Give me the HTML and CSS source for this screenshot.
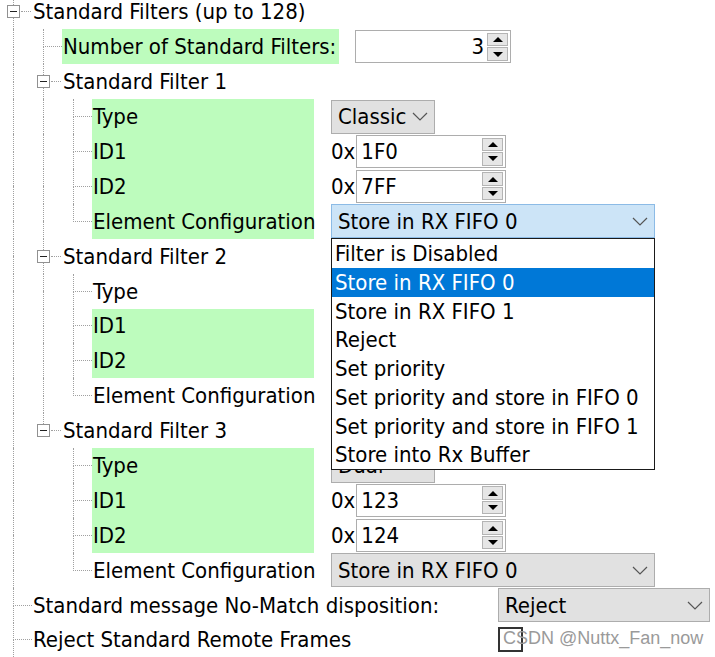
FILE: index.html
```html
<!DOCTYPE html>
<html>
<head>
<meta charset="utf-8">
<link rel="stylesheet" href="styles.css">
</head>
<body>
<div class="tree">
  <!-- 0 -->
  <div class="row">
    <span class="g c box btee"><span class="pmrow"><i class="pm"></i></span></span>
    <span class="lbl">Standard Filters (up to 128)</span>
  </div>
  <!-- 1 -->
  <div class="row">
    <span class="g pipe"></span><span class="g c tee"></span>
    <span class="lbl green w2">Number of Standard Filters:</span>
    <div class="ctrl c2"><div class="spin wnum"><span class="val right">3</span><span class="btns"><span class="up"></span><span class="dn"></span></span></div></div>
  </div>
  <!-- 2 -->
  <div class="row">
    <span class="g pipe"></span><span class="g c box btee"><span class="pmrow"><i class="pm"></i></span></span>
    <span class="lbl">Standard Filter 1</span>
  </div>
  <!-- 3 -->
  <div class="row">
    <span class="g pipe"></span><span class="g pipe"></span><span class="g c tee"></span>
    <span class="lbl green w3">Type</span>
    <div class="ctrl"><div class="combo wsm"><span>Classic</span><svg viewBox="0 0 16 9"><path d="M1 1 L8 8 L15 1" fill="none" stroke="#555" stroke-width="1.2"/></svg></div></div>
  </div>
  <!-- 4 -->
  <div class="row">
    <span class="g pipe"></span><span class="g pipe"></span><span class="g c tee"></span>
    <span class="lbl green w3">ID1</span>
    <div class="ctrl"><span class="hex">0x</span><div class="spin wid"><span class="val">1F0</span><span class="btns"><span class="up"></span><span class="dn"></span></span></div></div>
  </div>
  <!-- 5 -->
  <div class="row">
    <span class="g pipe"></span><span class="g pipe"></span><span class="g c tee"></span>
    <span class="lbl green w3">ID2</span>
    <div class="ctrl"><span class="hex">0x</span><div class="spin wid"><span class="val">7FF</span><span class="btns"><span class="up"></span><span class="dn"></span></span></div></div>
  </div>
  <!-- 6 -->
  <div class="row">
    <span class="g pipe"></span><span class="g pipe"></span><span class="g c elbow"></span>
    <span class="lbl green w3">Element Configuration</span>
    <div class="ctrl">
      <div class="combo wlg open"><span>Store in RX FIFO 0</span><svg viewBox="0 0 16 9"><path d="M1 1 L8 8 L15 1" fill="none" stroke="#555" stroke-width="1.2"/></svg>
        <div class="dd">
          <div>Filter is Disabled</div>
          <div class="sel">Store in RX FIFO 0</div>
          <div>Store in RX FIFO 1</div>
          <div>Reject</div>
          <div>Set priority</div>
          <div>Set priority and store in FIFO 0</div>
          <div>Set priority and store in FIFO 1</div>
          <div>Store into Rx Buffer</div>
        </div>
      </div>
    </div>
  </div>
  <!-- 7 -->
  <div class="row">
    <span class="g pipe"></span><span class="g c box btee"><span class="pmrow"><i class="pm"></i></span></span>
    <span class="lbl">Standard Filter 2</span>
  </div>
  <!-- 8 (controls hidden behind the open list) -->
  <div class="row">
    <span class="g pipe"></span><span class="g pipe"></span><span class="g c tee"></span>
    <span class="lbl w3">Type</span>
  </div>
  <!-- 9 -->
  <div class="row">
    <span class="g pipe"></span><span class="g pipe"></span><span class="g c tee"></span>
    <span class="lbl green w3">ID1</span>
  </div>
  <!-- 10 -->
  <div class="row">
    <span class="g pipe"></span><span class="g pipe"></span><span class="g c tee"></span>
    <span class="lbl green w3">ID2</span>
  </div>
  <!-- 11 -->
  <div class="row">
    <span class="g pipe"></span><span class="g pipe"></span><span class="g c elbow"></span>
    <span class="lbl w3">Element Configuration</span>
  </div>
  <!-- 12 -->
  <div class="row">
    <span class="g pipe"></span><span class="g c box belbow"><span class="pmrow"><i class="pm"></i></span></span>
    <span class="lbl">Standard Filter 3</span>
  </div>
  <!-- 13 -->
  <div class="row">
    <span class="g pipe"></span><span class="g"></span><span class="g c tee"></span>
    <span class="lbl green w3">Type</span>
    <div class="ctrl"><div class="combo wsm"><span>Dual</span><svg viewBox="0 0 16 9"><path d="M1 1 L8 8 L15 1" fill="none" stroke="#555" stroke-width="1.2"/></svg></div></div>
  </div>
  <!-- 14 -->
  <div class="row">
    <span class="g pipe"></span><span class="g"></span><span class="g c tee"></span>
    <span class="lbl green w3">ID1</span>
    <div class="ctrl"><span class="hex">0x</span><div class="spin wid"><span class="val">123</span><span class="btns"><span class="up"></span><span class="dn"></span></span></div></div>
  </div>
  <!-- 15 -->
  <div class="row">
    <span class="g pipe"></span><span class="g"></span><span class="g c tee"></span>
    <span class="lbl green w3">ID2</span>
    <div class="ctrl"><span class="hex">0x</span><div class="spin wid"><span class="val">124</span><span class="btns"><span class="up"></span><span class="dn"></span></span></div></div>
  </div>
  <!-- 16 -->
  <div class="row">
    <span class="g pipe"></span><span class="g"></span><span class="g c elbow"></span>
    <span class="lbl w3">Element Configuration</span>
    <div class="ctrl"><div class="combo wlg"><span>Store in RX FIFO 0</span><svg viewBox="0 0 16 9"><path d="M1 1 L8 8 L15 1" fill="none" stroke="#555" stroke-width="1.2"/></svg></div></div>
  </div>
  <!-- 17 -->
  <div class="row">
    <span class="g c tee"></span>
    <span class="lbl w1">Standard message No-Match disposition:</span>
    <div class="ctrl c1"><div class="combo wmd"><span>Reject</span><svg viewBox="0 0 16 9"><path d="M1 1 L8 8 L15 1" fill="none" stroke="#555" stroke-width="1.2"/></svg></div></div>
  </div>
  <!-- 18 -->
  <div class="row">
    <span class="g c tee"></span>
    <span class="lbl w1">Reject Standard Remote Frames</span>
    <div class="ctrl c1"><span class="chk"></span></div>
  </div>
</div>
<div class="wm">CSDN @Nuttx_Fan_now</div>
</body>
</html>
```
FILE: styles.css
```css
* { box-sizing: border-box; }
html, body { margin: 0; padding: 0; background: #fff; }
body {
  width: 715px;
  height: 657px;
  overflow: hidden;
  position: relative;
  font-family: "DejaVu Sans Condensed", "DejaVu Sans", sans-serif;
  font-stretch: condensed;
  font-size: 22px;
  color: #000;
}
.tree { margin-top: -5.5px; }
.row { display: flex; height: 34.9px; align-items: stretch; }

/* tree guides */
.g { width: 30px; flex: none; display: flex; flex-direction: column; }
.g.c { width: 32px; }
.g::before, .g::after { content: ""; flex: 1; margin-left: 13px; }
.pipe::before, .pipe::after { border-left: 1px dotted #a0a0a0; }
.tee::before { border-left: 1px dotted #a0a0a0; border-bottom: 1px dotted #a0a0a0; }
.tee::after { border-left: 1px dotted #a0a0a0; }
.elbow::before { border-left: 1px dotted #a0a0a0; border-bottom: 1px dotted #a0a0a0; }
.btee::before, .btee::after { border-left: 1px dotted #a0a0a0; }
.belbow::before { border-left: 1px dotted #a0a0a0; }
.pmrow { display: flex; align-items: center; height: 13px; margin-left: 7px; }
.pmrow::after { content: ""; flex: 1; border-top: 1px dotted #a0a0a0; margin-left: 1px; margin-right: 1px; }
.pm {
  width: 13px; height: 13px; flex: none;
  border: 1px solid #919191; background: #fff;
  display: flex; align-items: center; justify-content: center;
}
.pm::before { content: ""; width: 7px; height: 1px; background: #222; }

/* labels */
.lbl { display: flex; align-items: center; padding: 0 1px; flex: none; white-space: nowrap; }
.green { background: #bdfcbd; }
.w3 { width: 222px; }
.w2 { width: 277px; }
.w1 { width: 450px; }

/* controls */
.ctrl { display: flex; align-items: center; margin-left: 17px; flex: none; }
.ctrl.c2 { margin-left: 16px; }
.ctrl.c1 { margin-left: 16px; }
.combo {
  position: relative;
  height: 34px;
  border: 1px solid #adadad;
  background: #e1e1e1;
  display: flex; align-items: center; justify-content: space-between;
  padding: 0 6px 0 6px;
  white-space: nowrap;
}
.combo svg { width: 16px; height: 9px; flex: none; }
.combo.open { background: #cce4f7; border-color: #8cbbe6; }
.wsm { width: 104px; }
.wlg { width: 324px; }
.wmd { width: 212px; }

.hex { margin-right: 1px; }
.spin {
  height: 33px;
  border: 1px solid #adadad;
  background: #fff;
  display: flex; align-items: center;
}
.wnum { width: 156px; }
.wid { width: 150px; }
.val { flex: 1; padding-left: 4px; }
.val.right { text-align: right; padding-right: 3px; }
.btns { display: flex; flex-direction: column; width: 21px; height: 28px; margin-right: 2px; gap: 1px; }
.btns span {
  flex: 1; border: 1px solid #b4b4b4; background: #e6e6e6;
  display: flex; align-items: center; justify-content: center;
}
.btns .up::before { content: ""; border-left: 5px solid transparent; border-right: 5px solid transparent; border-bottom: 5px solid #000; }
.btns .dn::before { content: ""; border-left: 5px solid transparent; border-right: 5px solid transparent; border-top: 5px solid #000; }

/* dropdown list */
.dd {
  position: absolute;
  left: -1px; top: 33px;
  width: 324px;
  border: 1px solid #1a1a1a;
  background: #fff;
  z-index: 5;
}
.dd div { height: 28.75px; display: flex; align-items: center; padding-left: 3px; }
.dd .sel { background: #0078d7; color: #fff; }

.chk { width: 25px; height: 25px; border: 2px solid #333; background: #fff; }

.wm {
  position: absolute;
  left: 503px; top: 628px;
  font-family: "Liberation Sans", Arial, sans-serif;
  font-size: 18px;
  color: #9a9a9a;
  white-space: nowrap;
}
```
